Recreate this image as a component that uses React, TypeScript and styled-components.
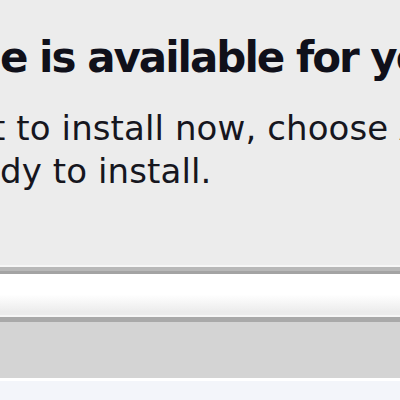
import styled, { createGlobalStyle } from 'styled-components';
import { FC } from 'react';

const GlobalStyle = createGlobalStyle`
  html, body {
    margin: 0;
    padding: 0;
    background: #ececec;
  }
  #root {
    width: 400px;
    height: 400px;
    overflow: hidden;
  }
`;

const Dialog = styled.div`
  width: 400px;
  height: 400px;
  display: flex;
  flex-direction: column;
  background: #ececec;
  font-family: 'DejaVu Sans', Verdana, sans-serif;
  overflow: hidden;
`;

const Message = styled.div`
  flex: 1;
  padding-top: 33px;
`;

const Heading = styled.h1`
  margin: 0;
  font-size: 42px;
  font-weight: bold;
  line-height: 50px;
  letter-spacing: -2px;
  color: #10101a;
  white-space: nowrap;
`;

const Body = styled.p`
  margin: 24px 0 0;
  font-size: 34px;
  line-height: 43px;
  letter-spacing: 0.1px;
  color: #16161e;
  white-space: nowrap;
`;

const Line = styled.span<{ $indent?: number }>`
  display: block;
  text-indent: ${(p) => p.$indent ?? 0}px;
`;

const Divider = styled.div`
  height: 9px;
  border-top: 2px solid #f6f6f6;
  border-bottom: 3px solid #a3a3a3;
  background: #b8b8b8;
  box-sizing: border-box;
`;

const ListArea = styled.div`
  height: 43px;
  background: linear-gradient(#ffffff 0%, #ffffff 50%, #ececec 92%, #ececec 100%);
  border-bottom: 2px solid #f6f6f6;
  box-sizing: border-box;
`;

const HeaderBar = styled.div`
  height: 61px;
  border-top: 5px solid #a9a9a9;
  background: #d4d4d4;
  box-sizing: border-box;
`;

const Row = styled.div`
  height: 22px;
  border-top: 3px solid #ffffff;
  background: #f3f5fa;
  box-sizing: border-box;
`;

const App: FC = () => (
  <>
    <GlobalStyle />
    <Dialog>
      <Message>
        <Heading>e is available for your computer.</Heading>
        <Body>
          <Line $indent={-8}>t to install now, choose Apple menu &gt; Software Update</Line>
          <Line $indent={0}>dy to install.</Line>
        </Body>
      </Message>
      <Divider />
      <ListArea />
      <HeaderBar />
      <Row />
    </Dialog>
  </>
);

export default App;
